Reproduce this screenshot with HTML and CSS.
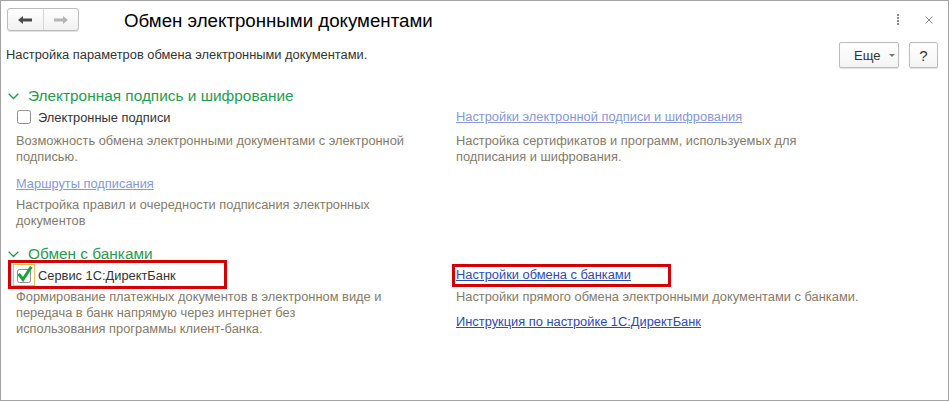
FILE: index.html
```html
<!DOCTYPE html>
<html lang="ru">
<head>
<meta charset="utf-8">
<title>Обмен электронными документами</title>
<link rel="stylesheet" href="styles.css">
</head>
<body>
<div class="window">
  <div class="titlebar">
    <div class="navgroup">
      <button class="nav back" type="button">
        <svg width="14" height="8" viewBox="0 0 14 8"><polygon points="0,4 5,0 5,2.5 14,2.5 14,5.5 5,5.5 5,8" fill="#4a4a4a"/></svg>
      </button>
      <button class="nav fwd" type="button">
        <svg width="14" height="8" viewBox="0 0 14 8"><polygon points="14,4 9,0 9,2.5 0,2.5 0,5.5 9,5.5 9,8" fill="#b4b4b4"/></svg>
      </button>
    </div>
    <h1 class="title">Обмен электронными документами</h1>
    <div class="winctl">
      <span class="kebab"><i></i><i></i><i></i><i></i></span>
      <span class="close">
        <svg width="8" height="8" viewBox="0 0 8 8"><path d="M0.5 0.5 L7.5 7.5 M7.5 0.5 L0.5 7.5" stroke="#8a8a8a" stroke-width="1" fill="none"/></svg>
      </span>
    </div>
  </div>

  <div class="cmdbar">
    <p class="lead">Настройка параметров обмена электронными документами.</p>
    <div class="cmds">
      <button class="btn more" type="button">Еще <span class="caret"></span></button>
      <button class="btn help" type="button">?</button>
    </div>
  </div>

  <section class="group">
    <div class="group-head">
      <svg class="chev" width="11" height="7" viewBox="0 0 11 7"><path d="M0.7 0.7 L5.5 5.5 L10.3 0.7" stroke="#1e9e4f" stroke-width="1.3" fill="none"/></svg>
      <span>Электронная подпись и шифрование</span>
    </div>
    <div class="group-body">
      <div class="col">
        <div class="row">
          <span class="check">
            <svg width="22" height="22" viewBox="0 0 22 22"><rect x="4.5" y="4.5" width="13" height="13" rx="2" fill="#fff" stroke="#8f8f8f"/></svg>
          </span>
          <span class="label">Электронные подписи</span>
        </div>
        <p class="note">Возможность обмена электронными документами с электронной<br>подписью.</p>
        <a class="link dim" href="#">Маршруты подписания</a>
        <p class="note">Настройка правил и очередности подписания электронных<br>документов</p>
      </div>
      <div class="col right">
        <div class="row">
          <a class="link dim" href="#">Настройки электронной подписи и шифрования</a>
        </div>
        <p class="note">Настройка сертификатов и программ, используемых для<br>подписания и шифрования.</p>
      </div>
    </div>
  </section>

  <section class="group second">
    <div class="group-head">
      <svg class="chev" width="11" height="7" viewBox="0 0 11 7"><path d="M0.7 0.7 L5.5 5.5 L10.3 0.7" stroke="#1e9e4f" stroke-width="1.3" fill="none"/></svg>
      <span>Обмен с банками</span>
    </div>
    <div class="group-body">
      <div class="col">
        <div class="row marked wide">
          <span class="check focused">
            <svg width="22" height="22" viewBox="0 0 22 22"><rect x="0.5" y="0.5" width="21" height="21" fill="none" stroke="#eac253"/><rect x="4.5" y="5.5" width="13" height="13" rx="2" fill="#fff" stroke="#8f8f8f"/><path d="M6.5 11 L10 15.5 L17.5 4" stroke="#18a03c" stroke-width="3" fill="none" stroke-linecap="square"/></svg>
          </span>
          <span class="label">Сервис 1С:ДиректБанк</span>
        </div>
        <p class="note">Формирование платежных документов в электронном виде и<br>передача в банк напрямую через интернет без<br>использования программы клиент-банка.</p>
      </div>
      <div class="col right">
        <div class="row marked tight">
          <a class="link" href="#">Настройки обмена с банками</a>
        </div>
        <p class="note">Настройки прямого обмена электронными документами с банками.</p>
        <a class="link" href="#">Инструкция по настройке 1С:ДиректБанк</a>
      </div>
    </div>
  </section>
</div>
</body>
</html>
```

FILE: styles.css
```css
*, *::before, *::after { box-sizing: border-box; }

body {
  margin: 0;
  background: #fff;
  font-family: "Liberation Sans", Arial, sans-serif;
  color: #333;
}

.window {
  width: 949px;
  height: 401px;
  border: 1px solid #a3a3a3;
  background: #fff;
  overflow: hidden;
}

/* title bar */
.titlebar {
  display: flex;
  align-items: flex-start;
  padding: 7px 0 0 6px;
  height: 30px;
}

.navgroup {
  display: flex;
  width: 72px;
  height: 23px;
  border: 1px solid #bcbcbc;
  border-radius: 3px;
  background: linear-gradient(#ffffff, #f1f1f1);
  box-shadow: 0 1px 0 #e2e2e2;
}

.nav {
  flex: 1;
  display: flex;
  align-items: center;
  justify-content: center;
  border: 0;
  padding: 0;
  margin: 0;
  background: transparent;
}

.nav.back { border-right: 1px solid #d6d6d6; }

.title {
  margin: 1px 0 0 45px;
  font-size: 18.7px;
  line-height: 23px;
  font-weight: normal;
  color: #000;
}

.winctl {
  margin-left: auto;
  display: flex;
  align-items: center;
  height: 23px;
  padding-right: 15px;
}

.kebab {
  display: flex;
  flex-direction: column;
  gap: 1px;
  width: 2px;
  margin-right: 26px;
}

.kebab i {
  display: block;
  width: 2px;
  height: 2px;
  background: #8a8a8a;
}

.close { display: flex; }

/* command bar */
.cmdbar {
  display: flex;
  align-items: center;
  margin-top: 11px;
  padding: 0 10px 0 5px;
  height: 26px;
}

.lead {
  margin: 0;
  font-size: 12.85px;
  line-height: 26px;
  color: #333;
}

.cmds {
  margin-left: auto;
  display: flex;
  gap: 10px;
}

.btn {
  height: 26px;
  border: 1px solid #bdbdbd;
  border-radius: 2px;
  background: linear-gradient(#ffffff, #f4f4f4);
  box-shadow: 0 1px 1px rgba(0,0,0,0.12);
  font-family: "Liberation Sans", Arial, sans-serif;
  color: #333;
  padding: 0;
  margin: 0;
}

.btn.more {
  width: 60px;
  font-size: 13px;
  display: flex;
  align-items: center;
  justify-content: flex-start;
  padding-left: 14px;
}

.caret {
  display: inline-block;
  margin-left: 9px;
  width: 0;
  height: 0;
  border-left: 3px solid transparent;
  border-right: 3px solid transparent;
  border-top: 3px solid #777;
}

.btn.help {
  width: 29px;
  font-size: 15px;
}

/* groups */
.group { margin-top: 18px; }
.group.second { margin-top: 15px; }

.group-head {
  display: flex;
  align-items: center;
  height: 20px;
  padding-left: 7px;
  font-size: 15.4px;
  color: #1e9e4f;
}

.chev { margin-right: 9px; margin-top: 1px; }

.group-body {
  display: grid;
  grid-template-columns: 440px 1fr;
  padding-left: 15px;
}

.col {
  display: flex;
  flex-direction: column;
  align-items: flex-start;
}

.row {
  position: relative;
  display: flex;
  align-items: center;
  height: 22px;
  font-size: 12.85px;
}

.check {
  display: flex;
  width: 22px;
  height: 22px;
  margin-left: -3px;
}

.label {
  margin-left: 3px;
  color: #333;
}

.note {
  margin: 5px 0 0;
  font-size: 12.85px;
  line-height: 16px;
  color: #857b69;
}

.second .note { margin-top: 3px; }

.link {
  margin-top: 11px;
  font-size: 12.85px;
  line-height: 16px;
  color: #2d4bb8;
  text-decoration: underline;
}

.second .link { margin-top: 9px; }

.row .link, .second .row .link { margin-top: 0; }

.link.dim { color: #8598dc; }

/* annotation frames drawn over the content */
.marked::after {
  content: "";
  position: absolute;
  border: 3px solid #d40000;
  pointer-events: none;
}

.marked.wide::after {
  left: -8px;
  top: -4px;
  width: 219px;
  height: 29px;
}

.marked.tight::after {
  left: -4px;
  top: 0;
  width: 219px;
  height: 23px;
}
```
